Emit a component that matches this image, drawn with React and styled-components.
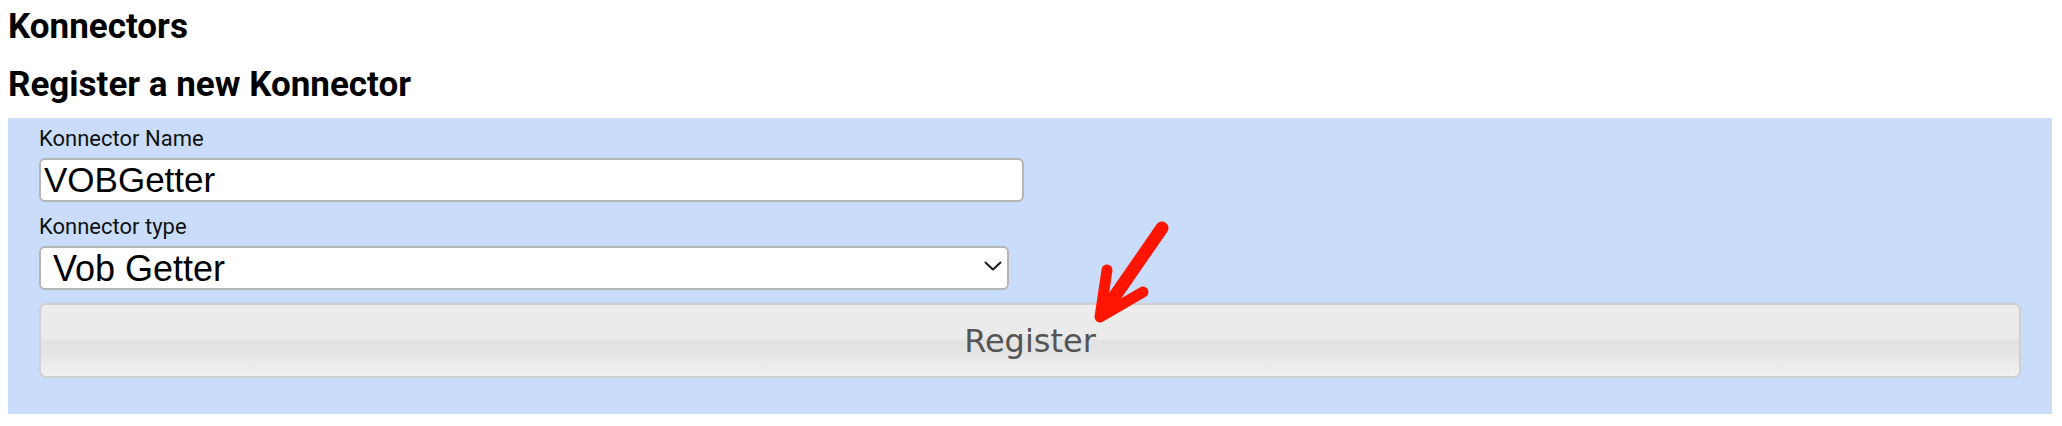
import React from "react";
import styled, { createGlobalStyle } from "styled-components";

const Global = createGlobalStyle`
  html, body { margin: 0; padding: 0; background: #ffffff; }
  body { font-family: Roboto, "Liberation Sans", sans-serif; color: #000; }
`;

const Page = styled.div`
  position: relative;
  padding: 6px 10px 0 8px;
`;

const Title = styled.h2`
  margin: ${(p) => p.$top || 0}px 0 0 0;
  font-family: Roboto, sans-serif;
  font-weight: 700;
  font-size: 35px;
  line-height: 41px;
  color: #000;
`;

const Panel = styled.form`
  margin-top: 13px;
  background: #c9ddfb;
  padding: 9px 31px 36px 31px;
  display: flex;
  flex-direction: column;
`;

const Label = styled.label`
  display: block;
  font-family: Roboto, sans-serif;
  font-size: 22px;
  line-height: 24px;
  color: #111;
  margin-top: ${(p) => p.$top || 0}px;
`;

const TextInput = styled.input`
  box-sizing: border-box;
  width: 985px;
  height: 44px;
  margin-top: 7px;
  border: 2px solid #b5b5b5;
  border-radius: 6px;
  background: #fff;
  padding: 0 3px;
  font-family: "Liberation Sans", Arial, sans-serif;
  font-size: 35px;
  color: #000;
  outline: none;
`;

const SelectWrap = styled.div`
  position: relative;
  width: 970px;
  margin-top: 7px;
`;

const Select = styled.select`
  box-sizing: border-box;
  width: 100%;
  height: 44px;
  appearance: none;
  -webkit-appearance: none;
  border: 2px solid #b5b5b5;
  border-radius: 6px;
  background: #fff;
  padding: 0 12px;
  font-family: "Liberation Sans", Arial, sans-serif;
  font-size: 36px;
  color: #000;
  outline: none;
`;

const Chevron = styled.svg`
  position: absolute;
  right: 7px;
  top: 15px;
  pointer-events: none;
`;

const RegisterButton = styled.button`
  box-sizing: border-box;
  width: 100%;
  height: 75px;
  margin-top: 13px;
  border: 2px solid #d0d0d0;
  border-radius: 7px;
  background: linear-gradient(
    to bottom,
    #ececec 0%,
    #eaeaea 48%,
    #e1e1e1 49%,
    #e6e6e6 70%,
    #f1f1f1 100%
  );
  font-family: "DejaVu Sans", Verdana, sans-serif;
  font-size: 32px;
  color: #555;
  cursor: pointer;
  padding: 0;
`;

const Arrow = styled.svg`
  position: absolute;
  left: 1090px;
  top: 218px;
  pointer-events: none;
`;

export default function App() {
  return (
    <>
      <Global />
      <Page>
        <Title as="h1">Konnectors</Title>
        <Title $top={17}>Register a new Konnector</Title>
        <Panel onSubmit={(e) => e.preventDefault()}>
          <Label htmlFor="kname">Konnector Name</Label>
          <TextInput id="kname" defaultValue="VOBGetter" />
          <Label htmlFor="ktype" $top={13}>Konnector type</Label>
          <SelectWrap>
            <Select id="ktype" defaultValue="vob">
              <option value="vob">Vob Getter</option>
            </Select>
            <Chevron width="18" height="10" viewBox="0 0 18 10">
              <path d="M1.5 1.5 L9 8.5 L16.5 1.5" fill="none" stroke="#1a1a1a" strokeWidth="2" strokeLinecap="round" strokeLinejoin="round" />
            </Chevron>
          </SelectWrap>
          <RegisterButton type="submit">Register</RegisterButton>
        </Panel>
        <Arrow width="90" height="115" viewBox="0 0 90 115">
          <g fill="none" stroke="#ff1500" strokeLinecap="round" strokeLinejoin="round">
            <path d="M72 10 L18 88" strokeWidth="13" />
            <path d="M17 52 L10 99 L53 74" strokeWidth="11" />
            <path d="M14 80 L12 96 L30 86 Z" fill="#ff1500" strokeWidth="9" />
          </g>
        </Arrow>
      </Page>
    </>
  );
}
